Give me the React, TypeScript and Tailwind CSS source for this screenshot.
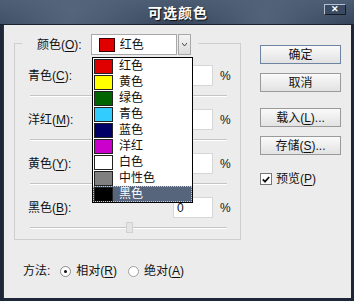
import React from "react";

const SWATCHES = [
  { name: "红色", color: "#e00000" },
  { name: "黄色", color: "#ffff00" },
  { name: "绿色", color: "#006400" },
  { name: "青色", color: "#33ccff" },
  { name: "蓝色", color: "#000066" },
  { name: "洋红", color: "#cc00cc" },
  { name: "白色", color: "#ffffff" },
  { name: "中性色", color: "#808080" },
  { name: "黑色", color: "#000000" },
];

const SLIDERS = [
  { label: "青色", key: "C" },
  { label: "洋红", key: "M" },
  { label: "黄色", key: "Y" },
  { label: "黑色", key: "B" },
];

function Hot({ k }: { k: string }) {
  return (
    <>
      (<span className="underline underline-offset-2">{k}</span>)
    </>
  );
}

function Btn({ children, primary }: { children: React.ReactNode; primary?: boolean }) {
  return (
    <div
      className={`w-[81px] h-[19px] flex items-center justify-center border bg-gradient-to-b from-[#fafafa] to-[#e2e2e2] text-[#111] ${
        primary ? "border-[#6e84a3]" : "border-[#9a9a9a]"
      }`}
    >
      {children}
    </div>
  );
}

export default function App() {
  return (
    <div className="w-[354px] h-[301px] bg-[#1d2738] flex flex-col font-['Liberation_Sans','Noto_Sans_CJK_SC',sans-serif] text-[12px] leading-[16px] text-[#111]">
      {/* title bar */}
      <div className="h-[25px] border-b border-[#1a2230] bg-[radial-gradient(circle_at_20%_40%,#55667c_0,transparent_40%),radial-gradient(circle_at_75%_60%,#52637a_0,transparent_35%),linear-gradient(to_bottom,#4a5a70,#34435a)] flex items-center relative">
        <div className="flex-1 text-center text-white font-bold text-[14px] [text-shadow:1px_1px_1px_#111] tracking-[1px] pl-[2px] font-['Noto_Sans_CJK_SC',sans-serif]">
          可选颜色
        </div>
        <div className="absolute right-[8px] top-[4px] w-[22px] h-[11px] bg-[#3a4a61] border-t border-l border-[#b5c1d0] border-b-[#151c28] border-r-[#151c28] border-b border-r flex items-center justify-center text-white text-[9px] font-bold leading-none">
          ✕
        </div>
      </div>

      {/* body */}
      <div className="flex-1 mx-[3px] mb-[3px] mt-0 bg-[#ececec] border-l border-[#2a3548] flex flex-col">
        <div className="flex">
          {/* group box */}
          <div className="mt-[18px] ml-[10px] w-[227px] h-[197px] border border-[#cfcfcf] relative">
            <div className="-mt-[10px] ml-[7px] w-[176px] pl-[15px] bg-[#ececec] flex items-center h-[21px]">
              <span>
                颜色<Hot k="O" />:
              </span>
              <div className="ml-[9px] flex h-[21px]">
                <div className="w-[86px] border border-[#a8a8a8] bg-white flex items-center pl-[7px]">
                  <span className="w-[16px] h-[14px] bg-[#e00000] border border-[#3a0000]" />
                  <span className="ml-[5px]">红色</span>
                </div>
                <div className="w-[13px] ml-[1px] border border-[#a8a8a8] bg-gradient-to-b from-[#f4f4f4] to-[#dcdcdc] flex items-center justify-center">
                  <svg width="5" height="3" viewBox="0 0 5 3">
                    <path d="M0 0 L2.5 3 L5 0" fill="none" stroke="#444" strokeWidth="1" />
                  </svg>
                </div>
              </div>
            </div>

            <div className="mt-[10px] flex flex-col">
              {SLIDERS.map((s) => (
                <div key={s.key} className="flex flex-col">
                  <div className="flex items-center h-[21px] pl-[13px]">
                    <span className="w-[145px]">
                      {s.label}
                      <Hot k={s.key} />:
                    </span>
                    <div className="w-[40px] h-[21px] bg-white border border-[#d6d6d6] flex items-center pl-[3px]">0</div>
                    <span className="ml-[7px]">%</span>
                  </div>
                  <div className="mt-[9px] mb-[12px] ml-[15px] w-[197px] h-[2px] border-t border-[#c4c4c4] border-b border-b-white relative">
                    <div className="absolute left-[96px] -top-[6px] w-[7px] h-[11px] bg-[#e4e4e4] border border-[#d0d0d0]" />
                  </div>
                </div>
              ))}
            </div>

            {/* open list */}
            <div className="absolute left-[77px] top-[13px] w-[101px] border border-black bg-white py-[0px] z-10">
              {SWATCHES.map((s, i) => {
                const sel = i === SWATCHES.length - 1;
                return (
                  <div
                    key={s.name}
                    className={`h-[16px] flex items-center pl-[1px] ${
                      sel ? "bg-[#56657b] text-white outline outline-1 outline-dotted outline-[#c8c8c8] -outline-offset-1" : ""
                    }`}
                  >
                    <span
                      className="w-[19px] h-[15px] border border-[#222]"
                      style={{ backgroundColor: s.color }}
                    />
                    <span className="ml-[6px]">{s.name}</span>
                  </div>
                );
              })}
            </div>
          </div>

          {/* right column */}
          <div className="ml-[19px] mt-[20px] flex flex-col">
            <Btn primary>确定</Btn>
            <div className="mt-[9px]">
              <Btn>取消</Btn>
            </div>
            <div className="mt-[16px]">
              <Btn>
                载入<Hot k="L" />...
              </Btn>
            </div>
            <div className="mt-[9px]">
              <Btn>
                存储<Hot k="S" />...
              </Btn>
            </div>
            <div className="mt-[16px] flex items-center">
              <div className="w-[12px] h-[12px] border border-[#777] bg-white flex items-center justify-center">
                <svg width="8" height="7" viewBox="0 0 8 7">
                  <path d="M0.8 3.4 L3 5.6 L7.2 1" fill="none" stroke="#111" strokeWidth="1.8" />
                </svg>
              </div>
              <span className="ml-[4px]">
                预览<Hot k="P" />
              </span>
            </div>
          </div>
        </div>

        {/* method row */}
        <div className="mt-[23px] ml-[19px] flex items-center h-[16px]">
          <span>方法:</span>
          <div className="ml-[10px] w-[11px] h-[11px] rounded-full border border-[#8a8a8a] bg-white flex items-center justify-center">
            <div className="w-[3px] h-[3px] rounded-full bg-[#111]" />
          </div>
          <span className="ml-[5px]">
            相对<Hot k="R" />
          </span>
          <div className="ml-[11px] w-[11px] h-[11px] rounded-full border border-[#a0a0a0] bg-white" />
          <span className="ml-[5px]">
            绝对<Hot k="A" />
          </span>
        </div>
      </div>
    </div>
  );
}
